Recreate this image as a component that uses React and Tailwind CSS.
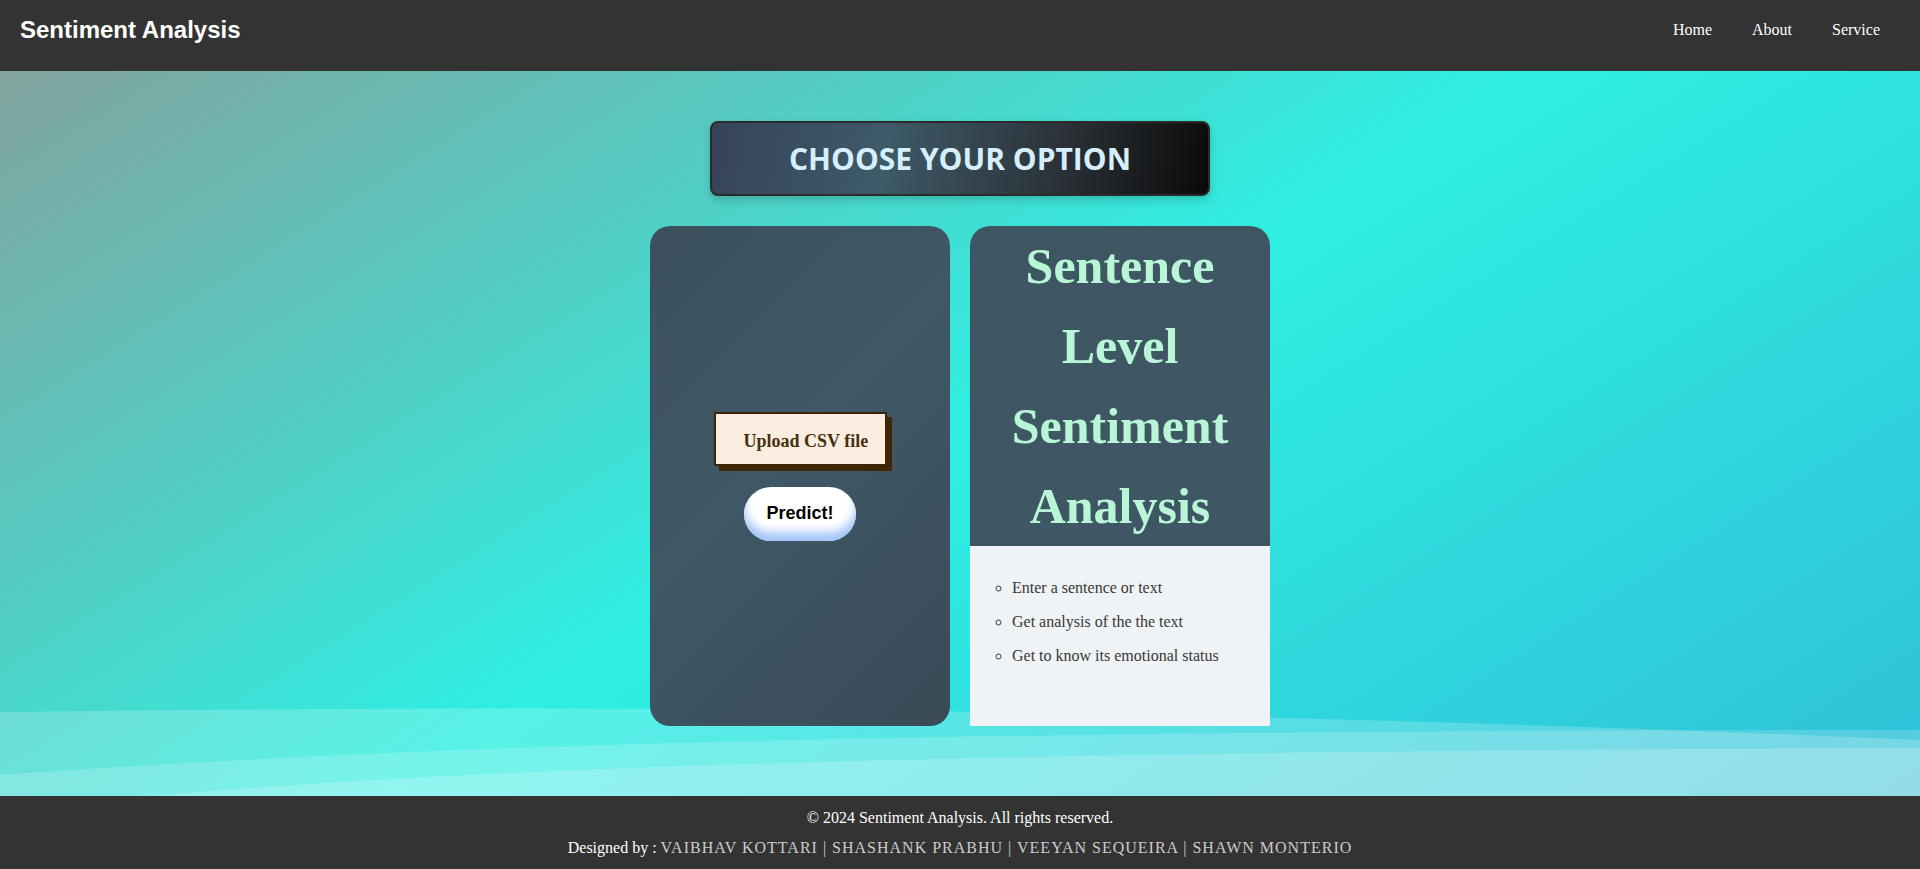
import React from "react";

const serif = { fontFamily: '"Liberation Serif", "Times New Roman", serif' };

function Header() {
    return (
        <header className="h-[71px] bg-[#333333] flex justify-between">
            <div
                className="ml-5 mt-[16px] text-[24px] leading-[28px] font-bold text-white"
                style={{ fontFamily: '"Liberation Sans", Arial, sans-serif' }}
            >
                Sentiment Analysis
            </div>
            <nav
                className="flex gap-10 pr-10 mt-[20px] text-[16px] leading-[20px] text-white"
                style={serif}
            >
                <a href="#">Home</a>
                <a href="#">About</a>
                <a href="#">Service</a>
            </nav>
        </header>
    );
}

function Waves() {
    return (
        <svg
            className="absolute bottom-0 left-0 w-full h-[100px]"
            viewBox="0 0 1920 100"
            preserveAspectRatio="none"
        >
            <path
                d="M0 16 C 500 10, 1100 8, 1920 44 L1920 100 L0 100 Z"
                fill="#ffffff"
                fillOpacity="0.2"
            />
            <path
                d="M0 79 C 400 50, 900 34, 1920 34 L1920 100 L0 100 Z"
                fill="#ffffff"
                fillOpacity="0.18"
            />
            <path
                d="M150 100 C 500 70, 1000 55, 1920 52 L1920 100 Z"
                fill="#ffffff"
                fillOpacity="0.2"
            />
        </svg>
    );
}

function UploadCard() {
    return (
        <div className="w-[300px] h-[500px] rounded-[20px] bg-[linear-gradient(135deg,#3c505d_0%,#3f5866_45%,#3a4a57_100%)] flex flex-col items-center justify-center gap-[21px]">
            <label
                className="h-[54px] w-[173px] flex items-center pl-[28px] pt-[5px] border-2 border-[#3d2508] bg-[#fcede1] shadow-[5px_5px_0_#3f2705] text-[18px] font-bold text-[#46300f] cursor-pointer"
                style={serif}
            >
                Upload CSV file
            </label>
            <button
                className="w-[112px] h-[54px] rounded-full bg-white shadow-[inset_0_-9px_10px_#a3c6fb] text-[18px] font-bold text-black"
                style={{ fontFamily: '"Liberation Sans", Arial, sans-serif' }}
            >
                Predict!
            </button>
        </div>
    );
}

function SentenceCard() {
    const points = [
        "Enter a sentence or text",
        "Get analysis of the the text",
        "Get to know its emotional status",
    ];

    return (
        <div className="w-[300px] h-[500px] flex flex-col" style={serif}>
            <div className="h-[320px] rounded-t-[20px] bg-[linear-gradient(180deg,#3e5562_0%,#3f5764_100%)] text-center text-[50px] leading-[80px] font-bold text-[#b9f6d8]">
                <div>Sentence</div>
                <div>Level</div>
                <div>Sentiment</div>
                <div>Analysis</div>
            </div>
            <div className="flex-1 bg-[#eff3f6]">
                <ul className="list-[circle] pl-[42px] pt-[30px] text-[16px] leading-[24px] text-[#383838]">
                    {points.map((p) => (
                        <li key={p} className="mb-[10px]">
                            {p}
                        </li>
                    ))}
                </ul>
            </div>
        </div>
    );
}

export default function App() {
    return (
        <div className="w-full min-h-[869px] flex flex-col">
            <Header />

            <main className="relative h-[725px] overflow-hidden bg-[linear-gradient(148deg,#82a39e_0%,#2eefe2_50%,#30bfd8_100%)]">
                <Waves />
                <div className="relative flex flex-col items-center pt-[50px]">
                    <div className="w-[500px] h-[75px] rounded-[8px] border-2 border-[#2b2b2b] bg-[linear-gradient(100deg,#36435a_0%,#3e5a68_35%,#2b3137_70%,#0a0a0a_100%)] shadow-[0_4px_10px_rgba(0,0,0,0.18)] flex items-center justify-center">
                        <span
                            className="text-[30px] font-bold text-[#d6effc]"
                            style={{ fontFamily: '"Open Sans", "Noto Sans", sans-serif' }}
                        >
                            CHOOSE YOUR OPTION
                        </span>
                    </div>

                    <div className="mt-[30px] flex gap-[20px]">
                        <UploadCard />
                        <SentenceCard />
                    </div>
                </div>
            </main>

            <footer
                className="h-[73px] bg-[#333333] flex flex-col items-center pt-[10px] gap-[6px] text-[16px] leading-[24px] text-white"
                style={serif}
            >
                <p>© 2024 Sentiment Analysis. All rights reserved.</p>
                <p>
                    Designed by :{" "}
                    <span className="text-[#cccccc] tracking-[1px]">
                        VAIBHAV KOTTARI | SHASHANK PRABHU | VEEYAN SEQUEIRA | SHAWN MONTERIO
                    </span>
                </p>
            </footer>
        </div>
    );
}
